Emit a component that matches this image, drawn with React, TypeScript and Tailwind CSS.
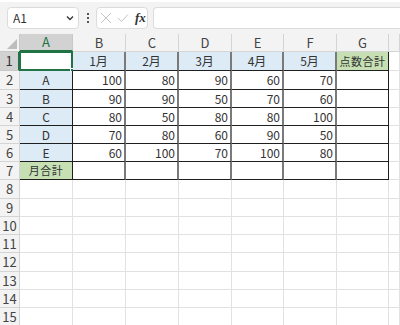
import React from "react";

const cols = ["A", "B", "C", "D", "E", "F", "G", ""];
const months = ["1月", "2月", "3月", "4月", "5月"];
const names = ["A", "B", "C", "D", "E"];
const scores = [
    [100, 80, 90, 60, 70],
    [90, 90, 50, 70, 60],
    [80, 50, 80, 80, 100],
    [70, 80, 60, 90, 50],
    [60, 100, 70, 100, 80],
];

// right border per column inside the table (A..G)
const tableRight = [
    "border-r border-r-[#1f1f1f]",
    "border-r-2 border-r-[#7a7a7a]",
    "border-r-2 border-r-[#7a7a7a]",
    "border-r-2 border-r-[#7a7a7a]",
    "border-r-2 border-r-[#7a7a7a]",
    "border-r-2 border-r-[#7a7a7a]",
    "border-r border-r-[#1f1f1f]",
];

function CellText({ value, align, small }: { value: string | number; align: "left" | "center" | "right"; small?: boolean }) {
    const a = align === "right" ? "justify-end pr-[2px]" : align === "center" ? "justify-center" : "justify-start pl-[2px]";
    return <div className={`flex h-full items-center ${a} ${small ? "text-[11px] tracking-[0.5px]" : ""}`}>{value}</div>;
}

function tableCell(row: number, col: number) {
    // row 1..7, col 0..6
    let fill = "bg-white";
    let text: string | number = "";
    let align: "left" | "center" | "right" = "right";
    let small = false;
    if (row === 1 && col >= 1 && col <= 5) {
        fill = "bg-[#ddebf7]";
        text = months[col - 1];
        align = "center";
    } else if (row === 1 && col === 6) {
        fill = "bg-[#c6e0b4]";
        text = "点数合計";
        align = "center";
        small = true;
    } else if (row >= 2 && row <= 6 && col === 0) {
        fill = "bg-[#ddebf7]";
        text = names[row - 2];
        align = "center";
    } else if (row === 7 && col === 0) {
        fill = "bg-[#c6e0b4]";
        text = "月合計";
        align = "center";
        small = true;
    } else if (row >= 2 && row <= 6 && col >= 1 && col <= 5) {
        text = scores[row - 2][col - 1];
    }
    const bottom = "border-b border-b-[#1f1f1f]";
    const sel = row === 1 && col === 0;
    return (
        <div key={`c${row}-${col}`} className={`relative ${fill} ${tableRight[col]} ${bottom}`}>
            <CellText value={text} align={align} small={small} />
            {sel && (
                <>
                    <div className="absolute -top-px -left-px -right-px -bottom-px border-2 border-[#217346]" />
                    <div className="absolute -right-[4px] -bottom-[4px] h-[6px] w-[6px] border border-white bg-[#217346]" />
                </>
            )}
        </div>
    );
}

export default function App() {
    const rows = Array.from({ length: 15 }, (_, i) => i + 1);

    return (
        <div className="h-[325px] w-[400px] overflow-hidden bg-white font-['Noto_Sans_CJK_JP','Liberation_Sans',sans-serif] text-[12px] text-[#333]">
            {/* formula bar */}
            <div className="flex h-[34px] items-center border-t-2 border-t-white bg-[#f3f3f3] pb-[1px]">
                <div className="ml-[7px] flex h-[22px] w-[72px] items-center justify-between rounded-[4px] border border-[#dcdcdc] bg-white pl-[5px] pr-[4px] text-[12px] text-[#333]">
                    <span>A1</span>
                    <svg width="8" height="6" viewBox="0 0 8 6">
                        <path d="M1 1.5 L4 4.5 L7 1.5" fill="none" stroke="#333" strokeWidth="1.3" />
                    </svg>
                </div>
                <div className="ml-[6px] flex w-[5px] flex-col items-center gap-[2px]">
                    <div className="h-[2px] w-[2px] bg-[#555]" />
                    <div className="h-[2px] w-[2px] bg-[#555]" />
                    <div className="h-[2px] w-[2px] bg-[#555]" />
                </div>
                <div className="ml-[6px] flex h-[22px] w-[52px] items-center rounded-[4px] border border-[#dcdcdc] bg-white pl-[3px]">
                    <svg width="12" height="12" viewBox="0 0 12 12">
                        <path d="M1 1 L11 11 M11 1 L1 11" stroke="#c4c4c4" strokeWidth="1" />
                    </svg>
                    <svg className="ml-[5px]" width="12" height="10" viewBox="0 0 12 10">
                        <path d="M1 5 L4.5 8.5 L11 1.5" fill="none" stroke="#c4c4c4" strokeWidth="1" />
                    </svg>
                    <span className="ml-[6px] font-['Liberation_Serif',serif] text-[13px] italic font-bold text-[#333]">fx</span>
                </div>
                <div className="ml-[5px] h-[22px] flex-1 rounded-l-[4px] border border-r-0 border-[#dcdcdc] bg-white" />
            </div>

            {/* sheet grid */}
            <div className="grid grid-cols-[20px_53px_53px_53px_53px_52px_53px_52px_1fr] grid-rows-[18px_19px_19px_18px_18px_18px_18px_18px_19px_18px_18px_18px_19px_18px_18px_19px]">
                {/* corner */}
                <div className="relative border-r border-b border-[#c8c8c8] bg-[#f3f3f3]">
                    <svg className="absolute right-[2px] bottom-[2px]" width="10" height="10" viewBox="0 0 10 10">
                        <path d="M10 0 L10 10 L0 10 Z" fill="#bdbdbd" />
                    </svg>
                </div>
                {cols.map((c, i) =>
                    i === 0 ? (
                        <div key="hA" className="flex items-center justify-center border-r border-r-[#c8c8c8] border-b-2 border-b-[#217346] bg-[#d2d2d2] text-[13px] text-[#217346]">
                            {c}
                        </div>
                    ) : (
                        <div key={`h${c}${i}`} className="flex items-center justify-center border-r border-b border-[#d4d4d4] bg-[#f3f3f3] text-[13px] text-[#444]">
                            {c}
                        </div>
                    )
                )}

                {rows.map((r) => (
                    <React.Fragment key={`r${r}`}>
                        {r === 1 ? (
                            <div className="flex items-center justify-center border-r-2 border-r-[#217346] border-b border-b-[#c8c8c8] bg-[#d2d2d2] text-[13px] text-[#333]">
                                {r}
                            </div>
                        ) : (
                            <div className="flex items-center justify-center border-r border-b border-[#d4d4d4] bg-[#f3f3f3] text-[13px] text-[#444]">
                                {r}
                            </div>
                        )}
                        {cols.map((_, ci) =>
                            r <= 7 && ci <= 6 ? (
                                tableCell(r, ci)
                            ) : (
                                <div key={`e${r}-${ci}`} className="border-r border-b border-[#e1e1e1] bg-white" />
                            )
                        )}
                    </React.Fragment>
                ))}
            </div>
        </div>
    );
}
